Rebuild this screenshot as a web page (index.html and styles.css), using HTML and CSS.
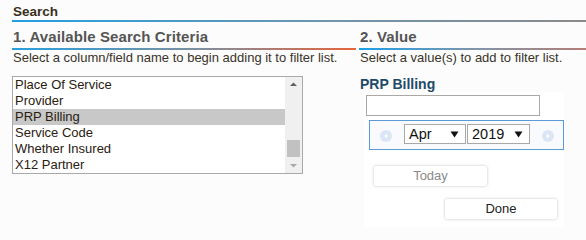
FILE: index.html
```html
<!DOCTYPE html>
<html>
<head>
<meta charset="utf-8">
<link rel="stylesheet" href="styles.css">
</head>
<body>
<div class="page">
  <div class="search-head">Search</div>
  <div class="rule rule-search"></div>
  <div class="columns">
    <div class="col col-left">
      <h2 class="col-title">1. Available Search Criteria</h2>
      <div class="rule rule-left"></div>
      <p class="hint">Select a column/field name to begin adding it to filter list.</p>
      <div class="listbox">
        <ul class="list-items">
          <li class="item">Place Of Service</li>
          <li class="item">Provider</li>
          <li class="item selected">PRP Billing</li>
          <li class="item">Service Code</li>
          <li class="item">Whether Insured</li>
          <li class="item">X12 Partner</li>
        </ul>
        <div class="scrollbar">
          <svg class="sb-arrow" width="17" height="14" viewBox="0 0 17 14"><path d="M5 9 L8.5 5.5 L12 9 Z" fill="#606060"/></svg>
          <div class="sb-track"><div class="sb-thumb"></div></div>
          <svg class="sb-arrow" width="17" height="14" viewBox="0 0 17 14"><path d="M5 5 L8.5 8.5 L12 5 Z" fill="#a8a8a8"/></svg>
        </div>
      </div>
    </div>
    <div class="col col-right">
      <h2 class="col-title">2. Value</h2>
      <div class="rule rule-right"></div>
      <p class="hint">Select a value(s) to add to filter list.</p>
      <div class="field-label">PRP Billing</div>
      <div class="value-panel">
        <div class="text-input"></div>
        <div class="cal-header">
          <svg class="nav-btn" width="12" height="12" viewBox="0 0 12 12"><circle cx="6" cy="6" r="6" fill="#dce5f5"/><path d="M7.2 3.5 L4.4 6 L7.2 8.5 Z" fill="#ffffff"/></svg>
          <div class="selects">
            <div class="fake-select sel-month"><span>Apr</span><svg width="9" height="7" viewBox="0 0 9 7"><path d="M0.5 0.5 L8.5 0.5 L4.5 6.5 Z" fill="#111"/></svg></div>
            <div class="fake-select sel-year"><span>2019</span><svg width="9" height="7" viewBox="0 0 9 7"><path d="M0.5 0.5 L8.5 0.5 L4.5 6.5 Z" fill="#111"/></svg></div>
          </div>
          <svg class="nav-btn" width="12" height="12" viewBox="0 0 12 12"><circle cx="6" cy="6" r="6" fill="#dce5f5"/><path d="M4.8 3.5 L7.6 6 L4.8 8.5 Z" fill="#ffffff"/></svg>
        </div>
        <div class="btn btn-today">Today</div>
        <div class="btn btn-done">Done</div>
      </div>
    </div>
  </div>
</div>
</body>
</html>
```
FILE: styles.css
```css
html, body {
  margin: 0;
  padding: 0;
  background: #fcfcfc;
}
body {
  font-family: "Liberation Sans", Arial, sans-serif;
  color: #333;
}
.page {
  padding: 4px 0 0 12px;
}
.search-head {
  font-weight: bold;
  font-size: 13.5px;
  line-height: 15px;
  padding: 0 0 1px 1px;
  color: #3a3020;
}
.rule {
  height: 2px;
}
.rule-search {
  background: linear-gradient(to right, #22a0e2, #6f95ad 55%, #8a8a8a);
}
.columns {
  display: flex;
  gap: 3px;
}
.col-left {
  width: 344px;
}
.col-right {
  flex: 1;
}
.col-title {
  margin: 6px 0 0 0;
  padding: 0 0 3px 1px;
  font-size: 15px;
  line-height: 17px;
  font-weight: bold;
  color: #555;
  letter-spacing: 0.1px;
}
.rule-left {
  background: linear-gradient(to right, #26a0dc, #7f8f9f 55%, #e5643a);
}
.rule-right {
  background: linear-gradient(to right, #1c9fe8, #7f95aa 50%, #b47e76);
}
.hint {
  margin: 0;
  padding-left: 1px;
  font-size: 13px;
  line-height: 15px;
  color: #3a3328;
}
.listbox {
  margin-top: 11px;
  width: 289px;
  height: 96px;
  border: 1px solid #a9a9a9;
  background: #fff;
  display: flex;
}
.list-items {
  list-style: none;
  margin: 0;
  padding: 0;
  flex: 1;
}
.item {
  height: 16px;
  line-height: 16px;
  font-size: 13px;
  padding-left: 2px;
  color: #2a2010;
}
.item.selected {
  background: #c8c8c8;
}
.scrollbar {
  width: 17px;
  background: #f0f0f0;
  display: flex;
  flex-direction: column;
}
.sb-arrow {
  display: block;
}
.sb-track {
  flex: 1;
  position: relative;
}
.sb-thumb {
  position: absolute;
  left: 2px;
  right: 2px;
  bottom: 2px;
  height: 17px;
  background: #c1c1c1;
}
.field-label {
  margin-top: 11px;
  padding-left: 1px;
  font-weight: bold;
  font-size: 14px;
  line-height: 16px;
  color: #1d4a6a;
}
.value-panel {
  background: #fff;
  margin-left: 5px;
  width: 200px;
  height: 134px;
  padding-top: 1px;
}
.text-input {
  margin: 2px 0 0 2px;
  width: 172px;
  height: 19px;
  border: 1px solid #a9a9a9;
  background: #fff;
}
.cal-header {
  margin: 4px 0 0 5px;
  border: 1px solid #5b9bd5;
  background: #f8fafd;
  display: flex;
  align-items: center;
  justify-content: space-between;
  padding: 0 9px 0 10px;
  box-sizing: border-box;
  width: 195px;
  height: 30px;
}
.nav-btn {
  display: block;
  margin-top: 2px;
}
.selects {
  display: flex;
  gap: 1px;
  margin-top: -2px;
}
.fake-select {
  height: 18px;
  border: 1px solid #a9a9a9;
  background: #fff;
  display: flex;
  align-items: center;
  justify-content: space-between;
  padding: 0 6px 0 4px;
  font-size: 14.5px;
  color: #111;
}
.sel-month {
  width: 50px;
}
.sel-year {
  width: 51px;
}
.btn {
  height: 20px;
  line-height: 20px;
  text-align: center;
  font-size: 13px;
  background: #fff;
  box-shadow: 0 0 3px rgba(0,0,0,0.25);
  border-radius: 2px;
}
.btn-today {
  margin: 16px 0 0 10px;
  width: 113px;
  color: #8a8a8a;
}
.btn-done {
  margin: 13px 0 0 81px;
  width: 112px;
  color: #222;
}
```
